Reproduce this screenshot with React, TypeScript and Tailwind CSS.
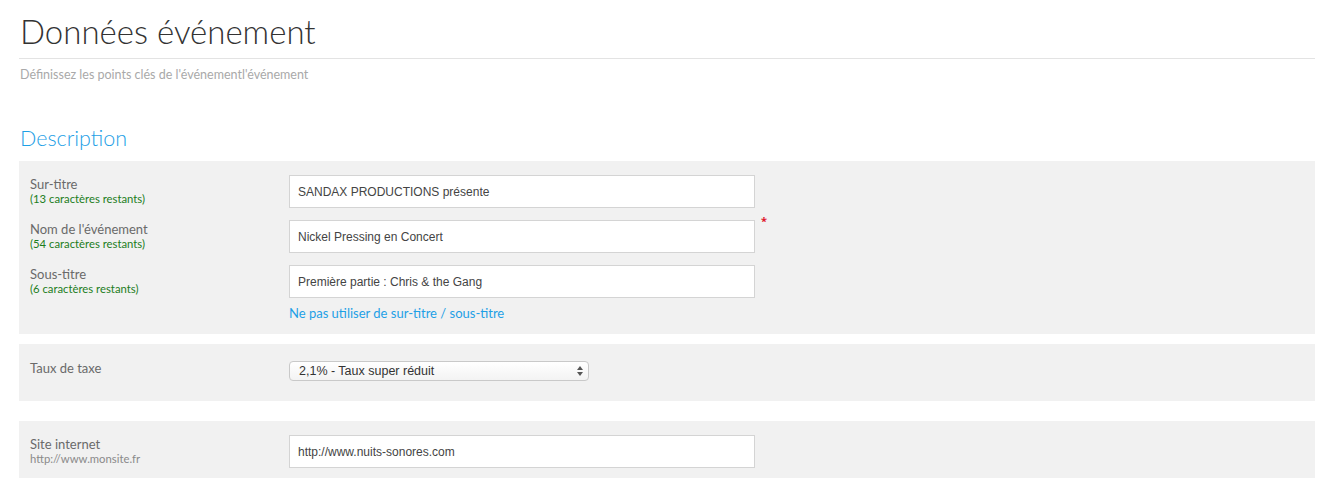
import React from 'react';

const sans = "font-['Lato','Open_Sans',sans-serif]";
const inputFont = "font-['Liberation_Sans',Arial,sans-serif]";

interface FieldProps {
  label: string;
  hint?: string;
  hintGreen?: boolean;
  children: React.ReactNode;
}

const Field: React.FC<FieldProps> = ({ label, hint, hintGreen = true, children }) => (
  <div className="flex">
    <div className="w-[270px] shrink-0 pl-[11px] pt-[1px]">
      <div className={`${sans} text-[13px] leading-[16px] text-[#6a6a6a]`}>{label}</div>
      {hint && (
        <div
          className={`${sans} text-[11.3px] leading-[14px] ${hintGreen ? 'text-[#1c7d1c]' : 'text-[#8a8a8a]'}`}
        >
          {hint}
        </div>
      )}
    </div>
    <div className="flex-1">{children}</div>
  </div>
);

const TextInput: React.FC<{ value: string; required?: boolean }> = ({ value, required }) => (
  <div className="flex items-start">
    <input
      type="text"
      defaultValue={value}
      className={`${inputFont} block w-[466px] h-[33px] px-[8px] bg-white border border-[#d4d4d4] text-[12px] text-[#444] outline-none`}
    />
    {required && <span className="ml-[6px] -mt-[7px] text-[#e0162b] text-[11px] font-bold">*</span>}
  </div>
);

export default function App() {
  return (
    <div className="bg-white min-h-[494px] px-[19px] pt-[9px]">
      {/* Header */}
      <h1 className={`${sans} font-light text-[33px] leading-[44px] text-[#333] pl-[1px]`}>
        Données événement
      </h1>
      <div className="mt-[5px] border-b border-[#e3e3e3] mr-[3px]" />
      <p className={`${sans} mt-[8px] text-[12.5px] leading-[16px] text-[#a9a9a9] pl-[1px]`}>
        Définissez les points clés de l'événementl'événement
      </p>

      {/* Description */}
      <h2 className={`${sans} font-light mt-[41px] text-[21.5px] leading-[28px] text-[#1ea0e6] pl-[1px]`}>
        Description
      </h2>

      <div className="mt-[9px] mr-[3px] bg-[#f1f1f1] pt-[14px] pb-[13px] flex flex-col gap-[12px]">
        <Field label="Sur-titre" hint="(13 caractères restants)">
          <TextInput value="SANDAX PRODUCTIONS présente" />
        </Field>
        <Field label="Nom de l'événement" hint="(54 caractères restants)">
          <TextInput value="Nickel Pressing en Concert" required />
        </Field>
        <Field label="Sous-titre" hint="(6 caractères restants)">
          <TextInput value="Première partie : Chris & the Gang" />
          <a href="#" className={`${sans} block mt-[7px] text-[13px] leading-[16px] text-[#1ea0e6]`}>
            Ne pas utiliser de sur-titre / sous-titre
          </a>
        </Field>
      </div>

      {/* Taux de taxe */}
      <div className="mt-[10px] mr-[3px] bg-[#f1f1f1] pt-[15px] pb-[20px]">
        <Field label="Taux de taxe">
          <div className="relative w-[300px] mt-[2px]">
            <select
              defaultValue="2.1"
              className={`${inputFont} block appearance-none w-full h-[20px] pl-[9px] pr-[20px] rounded-[4px] border border-[#c9c9c9] bg-gradient-to-b from-white to-[#f3f3f3] text-[12.5px] leading-[18px] text-[#333] outline-none`}
            >
              <option value="2.1">2,1% - Taux super réduit</option>
              <option value="5.5">5,5% - Taux réduit</option>
              <option value="20">20% - Taux normal</option>
            </select>
            <svg
              className="absolute right-[6px] top-[5px] pointer-events-none"
              width="6"
              height="10"
              viewBox="0 0 6 10"
            >
              <path d="M3 0 L6 4 L0 4 Z" fill="#555" />
              <path d="M3 10 L6 6 L0 6 Z" fill="#555" />
            </svg>
          </div>
        </Field>
      </div>

      {/* Site internet */}
      <div className="mt-[20px] mr-[3px] bg-[#f1f1f1] pt-[14px] pb-[10px]">
        <Field label="Site internet" hint="http://www.monsite.fr" hintGreen={false}>
          <TextInput value="http://www.nuits-sonores.com" />
        </Field>
      </div>
    </div>
  );
}
